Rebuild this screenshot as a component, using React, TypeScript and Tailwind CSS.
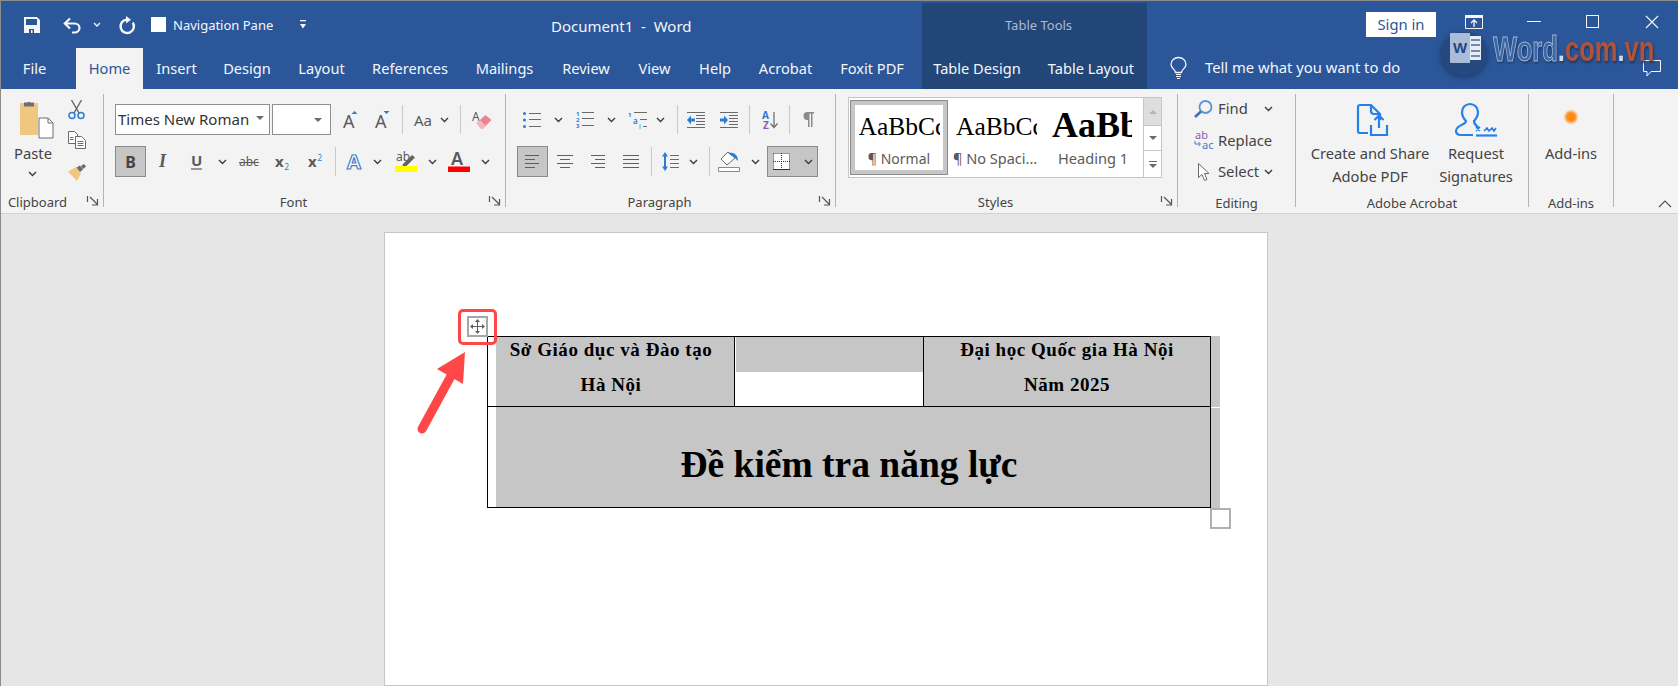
import type { ReactNode } from 'react';

type P = { className?: string };

const BLUE = '#2b7cd3';
const INK = '#5a5a5a';

const Chev = ({ className = '' }: P) => (
  <svg width="9" height="6" viewBox="0 0 9 6" className={`shrink-0 ${className}`}>
    <path d="M1 1l3.5 3.5L8 1" stroke="#3c3c3c" strokeWidth="1.4" fill="none" />
  </svg>
);

const Sep = ({ className = '' }: P) => <div className={`w-px h-[29px] bg-[#c8c8c8] shrink-0 ${className}`} />;

// quick access toolbar
const SaveIcon = ({ className = '' }: P) => (
  <svg width="16" height="16" viewBox="0 0 16 16" className={className}>
    <path d="M0 0h13l3 3v13H0z" fill="#f4f6fa" />
    <path d="M2 2h11v6H2z" fill="#2b579a" />
    <path d="M5 12h5v4H5z" fill="#2b579a" />
    <path d="M7 13h1.500v3H7z" fill="#f4f6fa" />
  </svg>
);
const UndoIcon = ({ className = '' }: P) => (
  <svg width="18" height="16" viewBox="0 0 18 16" className={className}>
    <path d="M7 1.500L1.800 6.500 7 11.500M2 6.500h9.500a5 4.500 0 0 1 0 9H9" stroke="#f4f6fa" strokeWidth="2.200" fill="none" />
  </svg>
);
const RedoIcon = ({ className = '' }: P) => (
  <svg width="17" height="17" viewBox="0 0 17 17" className={className}>
    <path d="M14.800 6.500A6.700 6.700 0 1 1 8.500 3.600" stroke="#f4f6fa" strokeWidth="2.400" fill="none" />
    <path d="M8 0l5 3.700L8 7.400z" fill="#f4f6fa" />
  </svg>
);
const CustomizeIcon = ({ className = '' }: P) => (
  <svg width="6" height="9" viewBox="0 0 6 9" className={className}>
    <path d="M0 0h6v1.200H0zM0 4h6L3 8.500z" fill="#f4f6fa" />
  </svg>
);

// clipboard group
const PasteIcon = ({ className = '' }: P) => (
  <svg width="35" height="38" viewBox="0 0 35 38" className={className}>
    <path d="M1 3h18v32H1z" fill="#efc77e" />
    <path d="M5 2.500h3.500a2 2 0 0 1 3 0H15v4H5z" fill="#6e6e6e" />
    <path d="M20 18h9l5 5v15H20z" fill="#fff" stroke="#6e6e6e" />
    <path d="M29 18v5h5" fill="none" stroke="#6e6e6e" />
  </svg>
);
const CutIcon = () => (
  <svg width="17" height="19" viewBox="0 0 17 19">
    <path d="M3.500 0l7.500 13M13.500 0L6 13" stroke="#6a6a6a" strokeWidth="1.500" fill="none" />
    <circle cx="4" cy="15.500" r="3" fill="none" stroke={BLUE} strokeWidth="1.500" />
    <circle cx="13" cy="15.500" r="3" fill="none" stroke={BLUE} strokeWidth="1.500" />
  </svg>
);
const CopyIcon = () => (
  <svg width="18" height="18" viewBox="0 0 18 18">
    <path d="M.5.500h6l3 3v9H.500z" fill="#fff" stroke="#6a6a6a" />
    <path d="M7.500 5.500h6l4 4v8h-10z" fill="#fff" stroke="#6a6a6a" />
    <path d="M9.500 10.500h6M9.500 12.500h6M9.500 14.500h6M2 6.500h3.500M2 8.500h3.500" stroke={BLUE} />
  </svg>
);
const PainterIcon = () => (
  <svg width="18" height="17" viewBox="0 0 18 17">
    <path d="M0 7.500L8 3l5 6.500-4 7.500z" fill="#efc77e" />
    <path d="M8.500 3.500L12 1.500l3 4-3 2.500z" fill="#6a6a6a" />
    <path d="M13 2l3-2 2 2.500-3 2.500z" fill="#6a6a6a" />
  </svg>
);
const Launcher = ({ className = '' }: P) => (
  <svg width="11" height="10" viewBox="0 0 11 10" className={className}>
    <path d="M.5 0v6M3 1l7 7M10.500 3v6H5" stroke="#555" strokeWidth="1.200" fill="none" />
  </svg>
);

// font group
const SvgLetter = ({ children, fill = INK, x = 0, y = 16, size = 18, weight = 400, italic = false }: { children: string; fill?: string; x?: number; y?: number; size?: number; weight?: number; italic?: boolean }) => (
  <text x={x} y={y} fill={fill} fontSize={size} fontWeight={weight} fontStyle={italic ? 'italic' : 'normal'} fontFamily="'Noto Sans',sans-serif">
    {children}
  </text>
);
const GrowIcon = ({ className = '', down = false }: P & { down?: boolean }) => (
  <svg width="15" height="20" viewBox="0 0 15 20" className={className}>
    <SvgLetter y={18} size={18}>A</SvgLetter>
    <path d={down ? 'M8.500 1h6l-3 3z' : 'M8.500 4h6l-3-3z'} fill={BLUE} />
  </svg>
);
const CaseIcon = ({ className = '' }: P) => (
  <svg width="18" height="18" viewBox="0 0 18 18" className={className}>
    <SvgLetter y={15} size={15}>Aa</SvgLetter>
  </svg>
);
const EraserIcon = ({ className = '' }: P) => (
  <svg width="20" height="19" viewBox="0 0 20 19" className={className}>
    <SvgLetter y={11} size={12}>A</SvgLetter>
    <path d="M4.500 13l9-8 6 5-8.500 8.500H9z" fill="#e98593" />
    <path d="M4.500 13l3.500-3 5.500 5.500-2.500 3H8.500z" fill="#f2b6be" />
  </svg>
);
const UnderlineIcon = ({ className = '' }: P) => (
  <svg width="11" height="17" viewBox="0 0 11 17" className={className}>
    <SvgLetter y={13} size={15} weight={700}>U</SvgLetter>
    <path d="M0 16h11" stroke={INK} strokeWidth="1.200" />
  </svg>
);
const StrikeIcon = ({ className = '' }: P) => (
  <svg width="20" height="14" viewBox="0 0 20 14" className={className}>
    <SvgLetter y={11} size={12}>abc</SvgLetter>
    <path d="M0 7.500h20" stroke={INK} />
  </svg>
);
const ScriptIcon = ({ className = '', sup = false }: P & { sup?: boolean }) => (
  <svg width="15" height="16" viewBox="0 0 15 16" className={className}>
    <SvgLetter y={13} size={15} weight={700}>x</SvgLetter>
    <SvgLetter fill={BLUE} x={9.500} y={sup ? 7 : 16} size={8}>2</SvgLetter>
  </svg>
);
const EffectsIcon = ({ className = '' }: P) => (
  <svg width="16" height="19" viewBox="0 0 16 19" className={className}>
    <text x="0" y="17" fontSize="20" fontWeight="700" fontFamily="'Noto Sans',sans-serif" fill="#fff" stroke="#3f80c8" strokeWidth="1.200">A</text>
  </svg>
);
const HighlightIcon = ({ className = '' }: P) => (
  <svg width="22" height="21" viewBox="0 0 22 21" className={className}>
    <SvgLetter y={10} size={12} x={1}>ab</SvgLetter>
    <path d="M8 13l9-9 3 2.500-9 9-4 1z" fill="#636363" />
    <path d="M0 15h22v6H0z" fill="#ffff00" />
  </svg>
);
const FontColorIcon = ({ className = '' }: P) => (
  <svg width="22" height="21" viewBox="0 0 22 21" className={className}>
    <SvgLetter x={3} y={14} size={18} weight={600}>A</SvgLetter>
    <path d="M0 15.500h22V21H0z" fill="#ff0000" />
  </svg>
);

// paragraph group
const Lines = ({ ys, x1, x2, color = '#6a6a6a' }: { ys: number[]; x1: number; x2: number; color?: string }) => (
  <>
    {ys.map((y) => (
      <path key={y} d={`M${x1} ${y + 0.5}H${x2}`} stroke={color} />
    ))}
  </>
);
const BulletsIcon = ({ className = '' }: P) => (
  <svg width="18" height="16" viewBox="0 0 18 16" className={className}>
    <circle cx="1.500" cy="1.500" r="1.500" fill={BLUE} />
    <circle cx="1.500" cy="8" r="1.500" fill={BLUE} />
    <circle cx="1.500" cy="14.500" r="1.500" fill={BLUE} />
    <Lines ys={[1, 7, 14]} x1={6} x2={18} />
  </svg>
);
const TinyNum = ({ x, y, children }: { x: number; y: number; children: string }) => (
  <text x={x} y={y} fontSize="6" fontWeight="700" fill={BLUE} fontFamily="'Noto Sans',sans-serif">{children}</text>
);
const NumberingIcon = ({ className = '' }: P) => (
  <svg width="18" height="17" viewBox="0 0 18 17" className={className}>
    <TinyNum x={0} y={5}>1</TinyNum>
    <TinyNum x={0} y={11}>2</TinyNum>
    <TinyNum x={0} y={17}>3</TinyNum>
    <Lines ys={[1, 7, 14]} x1={6} x2={18} />
  </svg>
);
const MultilevelIcon = ({ className = '' }: P) => (
  <svg width="19" height="18" viewBox="0 0 19 18" className={className}>
    <TinyNum x={0} y={6}>1</TinyNum>
    <text x="5" y="13" fontSize="8" fill={BLUE} fontWeight="600" fontFamily="'Noto Sans',sans-serif">a</text>
    <text x="11" y="18" fontSize="7" fill={BLUE} fontFamily="'Noto Sans',sans-serif">i</text>
    <Lines ys={[1]} x1={6} x2={19} />
    <Lines ys={[8]} x1={12} x2={19} />
    <Lines ys={[15]} x1={15} x2={19} />
  </svg>
);
const IndentIcon = ({ className = '', inc = false }: P & { inc?: boolean }) => (
  <svg width="18" height="16" viewBox="0 0 18 16" className={className}>
    <Lines ys={[0, 15]} x1={0} x2={18} />
    <Lines ys={[3, 6, 9, 12]} x1={9} x2={18} />
    <path d={inc ? 'M0 6.500h4V3.500L8 8l-4 4.500v-3H0z' : 'M8 6.500H4V3.500L0 8l4 4.500v-3h4z'} fill={BLUE} />
  </svg>
);
const SortIcon = ({ className = '' }: P) => (
  <svg width="16" height="18" viewBox="0 0 16 18" className={className}>
    <text x="0" y="8" fontSize="10" fontWeight="700" fill={BLUE} fontFamily="'Noto Sans',sans-serif">A</text>
    <text x="1" y="18" fontSize="10" fontWeight="700" fill="#8a5bb0" fontFamily="'Noto Sans',sans-serif">Z</text>
    <path d="M12 1v15M8.500 12.500L12 16.500l3.500-4" stroke="#6a6a6a" strokeWidth="1.200" fill="none" />
  </svg>
);
const PilcrowIcon = ({ className = '' }: P) => (
  <svg width="11" height="15" viewBox="0 0 11 15" className={className}>
    <path d="M4 0h7v1.500H9.500V15H8V1.500H6.500V15H5V8A4 4 0 0 1 4 0z" fill="#8a8a8a" />
  </svg>
);
const AlignIcon = ({ kind, className = '' }: P & { kind: 'left' | 'center' | 'right' | 'justify' }) => {
  const rows = {
    left: [[0, 14], [0, 10], [0, 14], [0, 10]],
    center: [[0, 16], [3, 13], [0, 16], [3, 13]],
    right: [[0, 14], [4, 14], [0, 14], [4, 14]],
    justify: [[0, 16], [0, 16], [0, 16], [0, 16]],
  }[kind];
  return (
    <svg width="16" height="13" viewBox="0 0 16 13" className={className}>
      {rows.map(([a, b], i) => (
        <path key={i} d={`M${a} ${i * 4 + 0.5}H${b}`} stroke="#5f5f5f" />
      ))}
    </svg>
  );
};
const SpacingIcon = ({ className = '' }: P) => (
  <svg width="17" height="19" viewBox="0 0 17 19" className={className}>
    <path d="M3 0l3 4.500H4v10h2L3 19l-3-4.500h2v-10H0z" fill={BLUE} />
    <Lines ys={[3, 7, 11, 15]} x1={8} x2={17} />
  </svg>
);
const ShadingIcon = ({ className = '' }: P) => (
  <svg width="22" height="20" viewBox="0 0 22 20" className={className}>
    <path d="M10 0l-7 7 6 6 8-7z" fill="#fff" stroke="#6a6a6a" />
    <path d="M10 1c5-1 10 1 10 8l-3-3z" fill={BLUE} />
    <path d="M.5 15.500h21v4H.500z" fill="#fff" stroke="#8a8a8a" />
  </svg>
);
const BordersIcon = ({ className = '' }: P) => (
  <svg width="17" height="17" viewBox="0 0 17 17" className={className}>
    <path d="M0 0h17v17H0z" fill="#fff" />
    <path d="M.5.500h16v16M.5.500v16M8.500 0v17M0 8.500h17" stroke="#333" strokeDasharray="1 1" fill="none" />
    <path d="M0 16.500h17" stroke="#333" />
  </svg>
);

// editing group
const FindIcon = () => (
  <svg width="19" height="18" viewBox="0 0 19 18">
    <circle cx="11.500" cy="7" r="6" fill="none" stroke="#5a93d6" strokeWidth="1.800" />
    <path d="M7 11.500L1 17" stroke="#3f6fa8" strokeWidth="2.600" />
  </svg>
);
const ReplaceIcon = () => (
  <svg width="21" height="19" viewBox="0 0 21 19">
    <text x="1" y="8" fontSize="11" fill="#8a5bb0" fontFamily="'Noto Sans',sans-serif">ab</text>
    <text x="8" y="18" fontSize="11" fill="#3f80c8" fontFamily="'Noto Sans',sans-serif">ac</text>
    <path d="M1 10v3h5M4.500 11l2 2-2 2" stroke="#3f80c8" fill="none" />
  </svg>
);
const CursorIcon = () => (
  <svg width="11" height="18" viewBox="0 0 11 18">
    <path d="M.5.500v14l3.500-3 2.500 6 2.500-1-2.500-6h4.500z" fill="#fff" stroke="#6a6a6a" />
  </svg>
);

// acrobat group
const CreateIcon = ({ className = '' }: P) => (
  <svg width="32" height="33" viewBox="0 0 32 33" fill="none" stroke="#2680eb" strokeWidth="2.200" className={className}>
    <path d="M11 29H3a2 2 0 0 1-2-2V3a2 2 0 0 1 2-2h11l9 9v6" />
    <path d="M14 1v6a3 3 0 0 0 3 3h6" />
    <path d="M14 21v10h16V21M22 24V12M17.500 16L22 11.500l4.500 4.500" />
  </svg>
);
const SignatureIcon = () => (
  <svg width="42" height="33" viewBox="0 0 42 33" fill="none" stroke="#2680eb" strokeWidth="2.200">
    <path d="M24 24c-2-2-5-3-5-7 2-2 4-5 4-9a8 8 0 0 0-16 0c0 4 2 7 4 9 0 4-10 4-10 10 0 3 2 4 5 4h12" />
    <path d="M21 23l4 4M25 23l-4 4M29 27l3-3 2 3 3-3 2 3 2-3" strokeWidth="1.600" />
    <path d="M21 31.500h21" />
  </svg>
);

// window controls
const RibbonDisplayIcon = ({ className = '' }: P) => (
  <svg width="18" height="14" viewBox="0 0 18 14" className={className}>
    <path d="M.5.500h17v13H.500z" fill="none" stroke="#f4f6fa" />
    <path d="M0 0h18v3H0z" fill="#f4f6fa" />
    <path d="M9 5v7M6 8l3-3 3 3" stroke="#f4f6fa" strokeWidth="1.300" fill="none" />
  </svg>
);
const BulbIcon = ({ className = '' }: P) => (
  <svg width="17" height="22" viewBox="0 0 17 22" className={className}>
    <path d="M5.500 15.500c0-3-4.500-4.500-4.500-8a7.500 7 0 0 1 15 0c0 3.500-4.500 5-4.500 8z" fill="none" stroke="#f4f6fa" strokeWidth="1.300" />
    <path d="M6 17.500h5M6 19.500h5M7 21.500h3" stroke="#f4f6fa" />
  </svg>
);
const CommentIcon = ({ className = '' }: P) => (
  <svg width="18" height="17" viewBox="0 0 18 17" className={className}>
    <path d="M.5.500h17v11H8l-4 4.500v-4.500H.500z" fill="none" stroke="#f4f6fa" />
  </svg>
);

const Tab = ({ label, className, active = false }: { label: string; className: string; active?: boolean }) => (
  <div className={`h-full flex items-center justify-center whitespace-nowrap text-[14.600px] ${active ? 'bg-[#f3f3f3] text-[#2b579a]' : 'text-[#f4f6fa]'} ${className}`}>
    {label}
  </div>
);

const Group = ({ width, label, labelClass = '', launcher = false, children }: { width: string; label: string; labelClass?: string; launcher?: boolean; children: ReactNode }) => (
  <section className={`${width} h-[113px] mt-[5px] flex flex-col shrink-0 border-r border-[#b4b4b4]`}>
    <div className="flex-1 min-h-0">{children}</div>
    <div className={`relative h-[16px] -mb-[4px] leading-[16px] text-[13px] text-center text-[#444] ${labelClass}`}>
      {label}
      {launcher && <Launcher className="absolute right-[5px] top-[2px]" />}
    </div>
  </section>
);

const Pressed = ({ className = '', children }: { className?: string; children: ReactNode }) => (
  <div className={`h-[31px] flex items-center bg-[#c6c6c6] border border-[#8a8a8a] shrink-0 ${className}`}>{children}</div>
);

export default function App() {
  return (
    <div className="h-[686px] w-[1678px] overflow-hidden flex flex-col border-l border-t border-[#8c8c8c] bg-[#e6e6e6] font-['Noto_Sans',sans-serif] text-[14px] [&_svg]:overflow-visible">
      {/* title bar and tabs */}
      <header className="h-[88px] flex shrink-0 bg-[#2b579a] text-[#f4f6fa]">
        <div className="w-[921px] shrink-0 flex flex-col">
          <div className="h-[47px] flex items-center">
            <SaveIcon className="ml-[23px]" />
            <UndoIcon className="ml-[23px]" />
            <svg width="8" height="6" viewBox="0 0 8 6" className="ml-[12px]">
              <path d="M1 1l3 3 3-3" stroke="#f4f6fa" strokeWidth="1.300" fill="none" />
            </svg>
            <RedoIcon className="ml-[17px]" />
            <div className="ml-[16px] w-[15px] h-[15px] bg-white" />
            <span className="ml-[7px] w-[100px] mt-[2px] text-[13px] whitespace-nowrap">Navigation Pane</span>
            <CustomizeIcon className="ml-[27px]" />
            <span className="ml-[245px] mt-[4px] text-[15px] whitespace-pre">Document1  -  Word</span>
          </div>
          <nav className="h-[41px] flex">
            <Tab label="File" className="w-[75px] pr-[8px]" />
            <Tab label="Home" active className="w-[67px]" />
            <Tab label="Insert" className="w-[67px]" />
            <Tab label="Design" className="w-[74px]" />
            <Tab label="Layout" className="w-[75px]" />
            <Tab label="References" className="w-[102px]" />
            <Tab label="Mailings" className="w-[87px]" />
            <Tab label="Review" className="w-[76px]" />
            <Tab label="View" className="w-[61px]" />
            <Tab label="Help" className="w-[60px]" />
            <Tab label="Acrobat" className="w-[81px]" />
            <Tab label="Foxit PDF" className="w-[92px]" />
          </nav>
        </div>

        <div className="w-[225px] shrink-0 flex flex-col mt-[2px] bg-[#234679]">
          <div className="h-[45px] flex items-center justify-center pt-[1px] pl-[8px] text-[13px] text-[#a9bad3]">Table Tools</div>
          <nav className="h-[41px] flex">
            <Tab label="Table Design" className="w-[110px]" />
            <Tab label="Table Layout" className="ml-[3px] w-[112px]" />
          </nav>
        </div>

        <div className="relative flex-1 flex flex-col">
          <div className="h-[47px] flex items-center">
            <div className="ml-[219px] w-[70px] h-[25px] bg-white text-[#2b579a] flex items-center justify-center text-[14.800px]">Sign in</div>
            <div className="flex items-center mb-[6px]">
              <RibbonDisplayIcon className="ml-[29px]" />
              <div className="ml-[44px] w-[14px] h-px bg-[#f4f6fa]" />
              <div className="ml-[45px] w-[13px] h-[13px] border border-[#f4f6fa]" />
              <svg width="14" height="14" viewBox="0 0 14 14" className="ml-[46px]">
                <path d="M1 1l12 12M13 1L1 13" stroke="#f4f6fa" strokeWidth="1.100" />
              </svg>
            </div>
          </div>
          <div className="h-[41px] flex items-center">
            <BulbIcon className="ml-[23px] -mt-[1px]" />
            <span className="ml-[18px] -mt-[2px] text-[14.800px] whitespace-nowrap">Tell me what you want to do</span>
            <CommentIcon className="ml-auto mr-[17px]" />
          </div>

          {/* site watermark over the title bar */}
          <div className="absolute left-[294px] top-[31px] w-[46px] h-[43px] rounded-full bg-[#25497f] shadow-[0_2px_6px_#1c3a66]" />
          <div className="absolute left-[303px] top-[32px] flex h-[30px] w-[31px]">
            <div className="w-[20px] h-full bg-[#a9bcd9] rounded-l-[1px] flex items-center justify-center text-[#24477c] text-[15px] font-bold font-['Liberation_Sans',sans-serif]">W</div>
            <div className="flex-1 my-[3px] flex flex-col justify-between py-[3px] px-[1px] bg-[#e8edf5]">
              <div className="h-[2px] bg-[#6e8bb7]" />
              <div className="h-[2px] bg-[#6e8bb7]" />
              <div className="h-[2px] bg-[#6e8bb7]" />
              <div className="h-[2px] bg-[#6e8bb7]" />
            </div>
          </div>
          <div className="absolute left-[346px] top-[28px] origin-left scale-x-[0.73] whitespace-nowrap text-[35px] leading-[40px] font-bold font-['Liberation_Sans',sans-serif] [text-shadow:1px_2px_3px_#1a3560]">
            <span className="text-[#3a67a8] [-webkit-text-stroke:1px_#a3b7d5]">Word</span>
            <span className="text-[#d5dce8]">.</span>
            <span className="text-[#b0533a]">com</span>
            <span className="text-[#d5dce8]">.</span>
            <span className="text-[#b0533a]">vn</span>
          </div>
        </div>
      </header>

      {/* ribbon */}
      <div className="h-[125px] flex shrink-0 bg-[#f3f3f3] border-b border-[#d2d2d2] text-[#444]">
        <Group width="w-[103px]" label="Clipboard" labelClass="pr-[29px] -top-px" launcher>
          <div className="flex h-full">
            <div className="w-[67px] pl-[13px] pt-[6px] flex flex-col">
              <PasteIcon className="ml-[5px]" />
              <span className="mt-[5px] w-[36px] text-center leading-[20px] text-[14.800px]">Paste</span>
              <Chev className="ml-[14px] mt-[8px]" />
            </div>
            <div className="pt-[6px] flex flex-col">
              <CutIcon />
              <div className="mt-[12px]"><CopyIcon /></div>
              <div className="mt-[15px]"><PainterIcon /></div>
            </div>
          </div>
        </Group>

        <Group width="w-[402px]" label="Font" labelClass="pr-[22px] -top-px" launcher>
          <div className="pl-[11px] pt-[10px]">
            <div className="h-[31px] flex items-center">
              <div className="w-[155px] h-[31px] bg-white border border-[#8f8f8f] flex items-center justify-between pl-[2px] pr-[5px] text-[#333] shrink-0">
                <span className="text-[15px] whitespace-nowrap">Times New Roman</span>
                <div className="w-0 h-0 border-x-[4px] border-x-transparent border-t-[4px] border-t-[#6a6a6a] -mt-[3px]" />
              </div>
              <div className="ml-[2px] w-[59px] h-[31px] bg-white border border-[#8f8f8f] flex items-center justify-end pr-[8px] shrink-0">
                <div className="w-0 h-0 border-x-[4px] border-x-transparent border-t-[4px] border-t-[#6a6a6a]" />
              </div>
              <GrowIcon className="ml-[12px]" />
              <GrowIcon down className="ml-[17px]" />
              <Sep className="ml-[12px]" />
              <CaseIcon className="ml-[11px]" />
              <Chev className="ml-[8px]" />
              <Sep className="ml-[11px]" />
              <EraserIcon className="ml-[11px]" />
            </div>
            <div className="h-[31px] mt-[11px] flex items-center">
              <Pressed className="w-[31px] justify-center font-bold text-[16px]">B</Pressed>
              <span className="ml-[13px] w-[9px] font-['Liberation_Serif',serif] italic font-bold text-[18px] text-[#5a5a5a]">I</span>
              <UnderlineIcon className="ml-[23px]" />
              <Chev className="ml-[16px]" />
              <StrikeIcon className="ml-[12px]" />
              <ScriptIcon className="ml-[16px]" />
              <ScriptIcon sup className="ml-[18px]" />
              <Sep className="ml-[12px]" />
              <EffectsIcon className="ml-[11px]" />
              <Chev className="ml-[10px]" />
              <HighlightIcon className="ml-[13px]" />
              <Chev className="ml-[11px]" />
              <FontColorIcon className="ml-[11px]" />
              <Chev className="ml-[11px]" />
            </div>
          </div>
        </Group>

        <Group width="w-[330px]" label="Paragraph" labelClass="pr-[22px] -top-px" launcher>
          <div className="pl-[11px] pt-[10px]">
            <div className="h-[31px] flex items-center">
              <BulletsIcon className="ml-[6px]" />
              <Chev className="ml-[13px]" />
              <NumberingIcon className="ml-[13px]" />
              <Chev className="ml-[13px]" />
              <MultilevelIcon className="ml-[12px]" />
              <Chev className="ml-[9px]" />
              <Sep className="ml-[12px]" />
              <IndentIcon className="ml-[9px]" />
              <IndentIcon inc className="ml-[15px]" />
              <Sep className="ml-[11px]" />
              <SortIcon className="ml-[12px]" />
              <Sep className="ml-[11px]" />
              <PilcrowIcon className="ml-[13px]" />
            </div>
            <div className="h-[31px] mt-[11px] flex items-center">
              <Pressed className="w-[31px] justify-center"><AlignIcon kind="left" /></Pressed>
              <AlignIcon kind="center" className="ml-[9px]" />
              <AlignIcon kind="right" className="ml-[18px]" />
              <AlignIcon kind="justify" className="ml-[16px]" />
              <Sep className="ml-[12px]" />
              <SpacingIcon className="ml-[10px]" />
              <Chev className="ml-[10px]" />
              <Sep className="ml-[11px]" />
              <ShadingIcon className="ml-[8px]" />
              <Chev className="ml-[11px]" />
              <Pressed className="ml-[7px] w-[51px] pl-[5px]">
                <BordersIcon />
                <Chev className="ml-[14px]" />
              </Pressed>
            </div>
          </div>
        </Group>

        <Group width="w-[342px]" label="Styles" labelClass="pr-[22px] -top-px" launcher>
          <div className="ml-[12px] mt-[3px] w-[314px] h-[81px] flex bg-white border border-[#c6c6c6] text-[#5a5a5a]">
            <div className="w-[98px] h-[75px] ml-px mt-[2px] shrink-0 border border-[#8a8a8a] flex flex-col items-center">
              <div className="w-full h-full border-[4px] border-[#c6c6c6] flex flex-col items-center">
                <div className="w-[81px] h-[40px] overflow-hidden font-['Liberation_Serif',serif] text-[25.500px] leading-[38px] mt-[3px] text-black whitespace-nowrap">AaBbCc</div>
                <span className="text-[14px] whitespace-nowrap">¶ Normal</span>
              </div>
            </div>
            <div className="w-[104px] h-[75px] mt-[2px] shrink-0 flex flex-col pl-[8px]">
              <div className="w-[81px] h-[40px] mt-[8px] overflow-hidden font-['Liberation_Serif',serif] text-[25.500px] leading-[38px] text-black whitespace-nowrap">AaBbCc</div>
              <span className="text-[14.500px] -ml-[3px] whitespace-nowrap">¶ No Spaci...</span>
            </div>
            <div className="w-[91px] h-[75px] mt-[2px] shrink-0 flex flex-col">
              <div className="w-[80px] h-[44px] mt-[3px] overflow-hidden font-['Liberation_Serif',serif] font-bold text-[36px] leading-[44px] text-black whitespace-nowrap">AaBb</div>
              <span className="text-[14.600px] mt-[1px] pl-[6px] whitespace-nowrap">Heading 1</span>
            </div>
            <div className="w-[20px] flex flex-col ml-auto border-l border-[#c6c6c6]">
              <div className="h-[28px] bg-[#dedede] border-b border-[#c6c6c6] flex items-center justify-center">
                <div className="w-0 h-0 border-x-[4px] border-x-transparent border-b-[4px] border-b-[#b4b4b4]" />
              </div>
              <div className="h-[25px] border-b border-[#c6c6c6] flex items-center justify-center">
                <div className="w-0 h-0 border-x-[4px] border-x-transparent border-t-[4px] border-t-[#6a6a6a]" />
              </div>
              <div className="flex-1 flex flex-col items-center justify-center">
                <div className="w-[8px] h-px mb-[2px] bg-[#6a6a6a]" />
                <div className="w-0 h-0 border-x-[4px] border-x-transparent border-t-[4px] border-t-[#6a6a6a]" />
              </div>
            </div>
          </div>
        </Group>

        <Group width="w-[118px]" label="Editing">
          <div className="pl-[16px] w-[95px] -mt-[1px] text-[14.800px]">
            <div className="h-[31px] flex items-center">
              <div className="w-[24px]"><FindIcon /></div>
              <span>Find</span>
              <Chev className="ml-auto" />
            </div>
            <div className="h-[32px] flex items-center">
              <div className="w-[24px]"><ReplaceIcon /></div>
              <span>Replace</span>
            </div>
            <div className="h-[31px] flex items-center">
              <div className="w-[24px] pl-[4px]"><CursorIcon /></div>
              <span>Select</span>
              <Chev className="ml-auto" />
            </div>
          </div>
        </Group>

        <Group width="w-[233px]" label="Adobe Acrobat">
          <div className="flex pt-[10px] text-[14.700px] leading-[23px] text-center">
            <div className="w-[148px] flex flex-col items-center">
              <CreateIcon className="ml-[6px]" />
              <span className="mt-[5px] whitespace-nowrap">Create and Share</span>
              <span className="whitespace-nowrap">Adobe PDF</span>
            </div>
            <div className="w-[64px] flex flex-col items-center">
              <SignatureIcon />
              <span className="mt-[5px] whitespace-nowrap">Request</span>
              <span className="whitespace-nowrap">Signatures</span>
            </div>
          </div>
        </Group>

        <Group width="w-[85px]" label="Add-ins">
          <div className="flex flex-col items-center pt-[17px] text-[14.700px] leading-[23px]">
            <div className="w-[12px] h-[12px] rounded-full bg-[#ff8a12] blur-[1px]" />
            <span className="mt-[19px]">Add-ins</span>
          </div>
        </Group>

        <div className="flex-1 flex items-end justify-end pr-[6px] pb-[5px]">
          <svg width="14" height="8" viewBox="0 0 14 8">
            <path d="M1 7l6-6 6 6" stroke="#555" strokeWidth="1.200" fill="none" />
          </svg>
        </div>
      </div>

      {/* document */}
      <main className="flex-1 min-h-0 pt-[18px] pl-[383px]">
        <div className="w-[884px] h-full bg-white border border-[#c6c6c6] pt-[103px] pl-[102px]">
          <div className="relative w-fit flex">
            <div className="w-[724px] border border-black font-['Liberation_Serif',serif] font-bold text-black">
              <div className="grid grid-cols-[247px_189px_286px] grid-rows-[69px] h-[70px] border-b border-black text-[19px] leading-[35px] text-center tracking-[0.55px]">
                <div className="overflow-hidden border-r border-r-black border-l-[8px] border-l-white bg-[#c6c6c6]">
                  <div className="-ml-[8px] -mt-[5px]">Sở Giáo dục và Đào tạo</div>
                  <div className="-ml-[8px]">Hà Nội</div>
                </div>
                <div className="border-r border-r-black pl-px">
                  <div className="h-[35px] bg-[#c6c6c6]" />
                </div>
                <div className="overflow-hidden bg-[#c6c6c6]">
                  <div className="-mt-[5px]">Đại học Quốc gia Hà Nội</div>
                  <div>Năm 2025</div>
                </div>
              </div>
              <div className="h-[100px] border-l-[8px] border-white flex items-center justify-center text-[37.500px] bg-[#c6c6c6]">
                <span className="-ml-[8px] mt-[16px]">Đề kiểm tra năng lực</span>
              </div>
            </div>
            <div className="w-[9px] flex flex-col">
              <div className="h-[71px] bg-[#c6c6c6]" />
              <div className="h-px bg-white" />
              <div className="flex-1 bg-[#c6c6c6]" />
            </div>

            {/* table move handle with the callout around it */}
            <div className="absolute left-[-20px] top-[-20px] w-[21px] h-[21px] bg-white border-2 border-[#a6a6a6] flex items-center justify-center">
              <svg width="15" height="15" viewBox="0 0 15 15">
                <path d="M7.500 1v13M1 7.500h13" stroke="#5f5f5f" />
                <path d="M7.500 0l2.500 3H5zM7.500 15L5 12h5zM0 7.500L3 5v5zM15 7.500L12 5v5z" fill="#5f5f5f" />
              </svg>
            </div>
            <div className="absolute left-[-29px] top-[-27px] w-[39px] h-[36px] rounded-[5px] border-[3px] border-[#ff4747]" />
            <svg width="56" height="88" viewBox="0 0 56 88" className="absolute left-[-72px] top-[12px]">
              <path d="M50 4L22 21l26 15z" fill="#ff4747" />
              <path d="M7 81L36 28" stroke="#ff4747" strokeWidth="9" strokeLinecap="round" />
            </svg>
            <div className="absolute left-[723px] top-[172px] w-[21px] h-[21px] bg-white border-2 border-[#b0b0b0]" />
          </div>
        </div>
      </main>
    </div>
  );
}
